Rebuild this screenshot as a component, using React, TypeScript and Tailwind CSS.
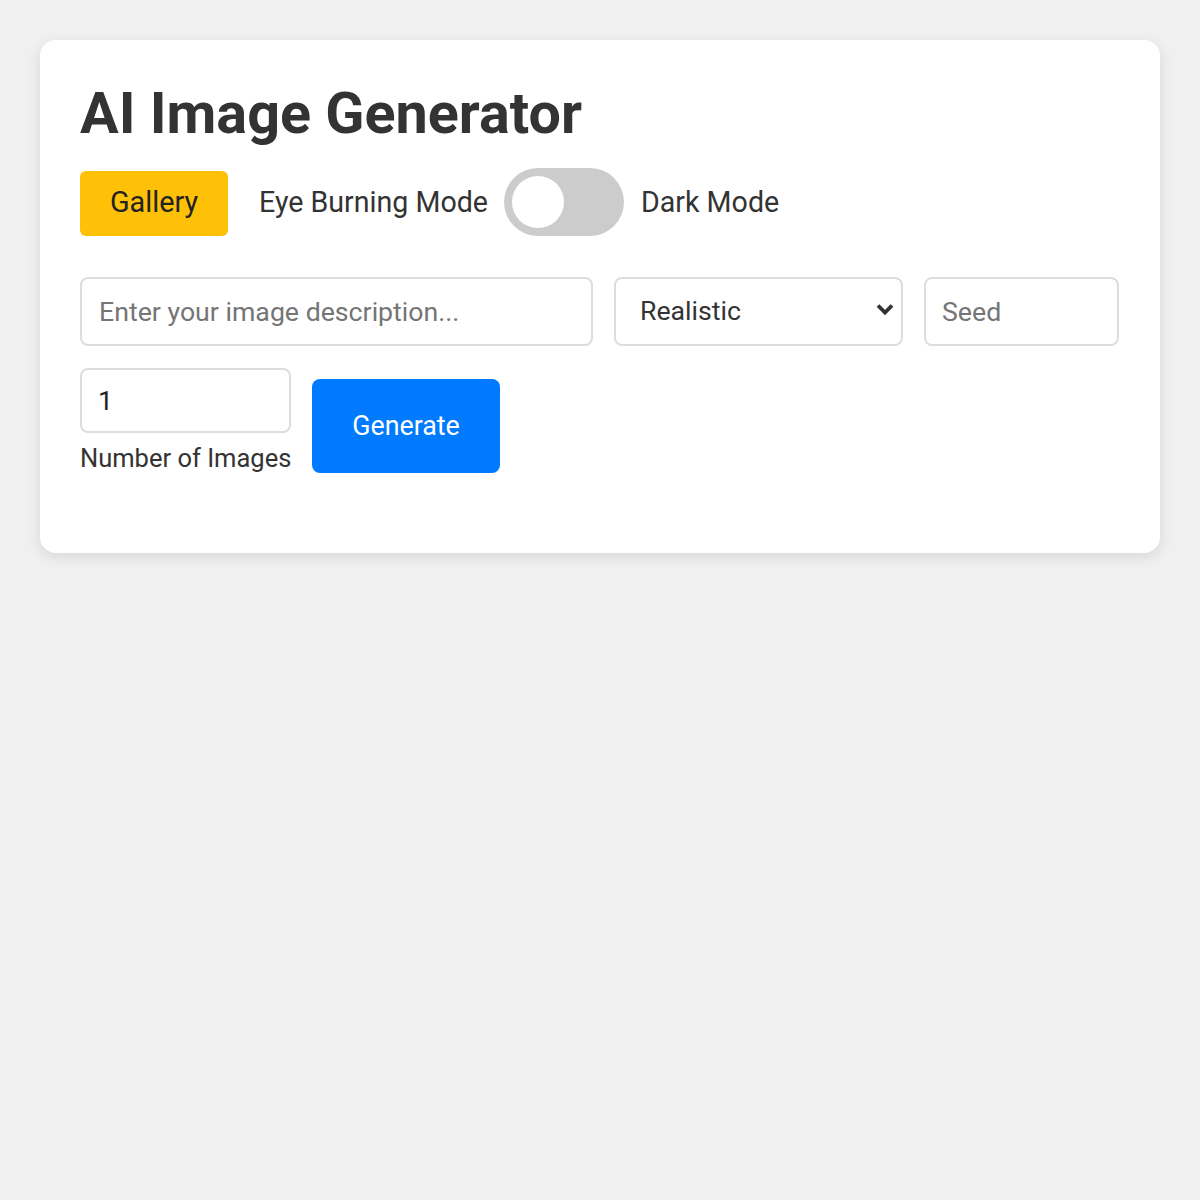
import React, { useState } from "react";

export default function App() {
  const [dark, setDark] = useState(false);
  return (
    <div className="min-h-[1200px] bg-[#f0f0f0] pt-10 px-10 font-['Roboto',sans-serif] text-[#333]">
      <div className="bg-white rounded-[16px] shadow-[0_4px_14px_rgba(0,0,0,0.1)] px-10 pt-[40px] pb-[80px]">
        <h1 className="text-[57.5px] font-bold leading-[64px] text-[#333] mt-[2px]">AI Image Generator</h1>
        <div className="flex items-center mt-[22px] h-[68px]">
          <button className="h-[65px] w-[148px] rounded-[6px] bg-[#ffc107] text-[28.8px] text-[#222] mt-[2px]">
            Gallery
          </button>
          <span className="ml-[31px] text-[28.6px] text-[#333]">Eye Burning Mode</span>
          <button
            onClick={() => setDark(!dark)}
            className="ml-[16px] h-[68px] w-[120px] rounded-full bg-[#ccc] flex items-center px-[8px]"
          >
            <span className="block h-[52px] w-[52px] rounded-full bg-white" />
          </button>
          <span className="ml-[17px] text-[28.6px] text-[#333]">Dark Mode</span>
        </div>
        <div className="flex mt-[41px] gap-[21px]">
          <input
            className="h-[69px] w-[513px] rounded-[8px] border-2 border-[#ddd] px-[17px] text-[26.7px] placeholder:text-[#757575] outline-none"
            placeholder="Enter your image description..."
          />
          <div className="relative h-[69px] w-[289px] rounded-[8px] border-2 border-[#ddd] flex items-center pl-[24px] text-[26.7px] text-[#333]">
            Realistic
            <svg className="absolute right-[7px] top-[24px]" width="18" height="14" viewBox="0 0 18 14">
              <path d="M2 2.5 L9 9.5 L16 2.5" fill="none" stroke="#333" strokeWidth="3.8" strokeLinecap="butt" strokeLinejoin="miter" />
            </svg>
          </div>
          <input
            className="h-[69px] w-[195px] rounded-[8px] border-2 border-[#ddd] px-[16px] text-[26.7px] placeholder:text-[#757575] outline-none"
            placeholder="Seed"
          />
        </div>
        <div className="flex items-start mt-[22px] gap-[21px]">
          <div className="flex flex-col w-[211px]">
            <input
              className="h-[65px] w-[211px] rounded-[8px] border-2 border-[#ddd] px-[16px] text-[26.7px] text-[#222] outline-none"
              defaultValue="1"
            />
            <span className="mt-[10px] text-[25.5px] leading-[30px] text-[#333] whitespace-nowrap">Number of Images</span>
          </div>
          <button className="mt-[11px] h-[94px] w-[188px] rounded-[8px] bg-[#007bff] text-white text-[26.8px]">
            Generate
          </button>
        </div>
      </div>
    </div>
  );
}
